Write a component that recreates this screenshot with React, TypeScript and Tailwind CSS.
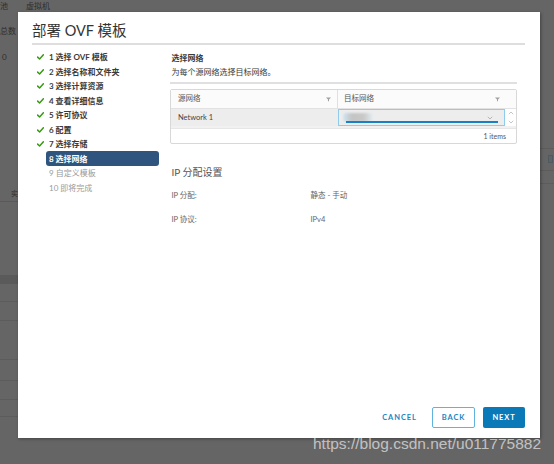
import React from "react";

const Check = () => (
  <svg width="7" height="6" viewBox="0 0 7 6" className="block">
    <path d="M0.6 3.1 L2.6 5 L6.4 0.8" fill="none" stroke="#3a9a12" strokeWidth="1.5" strokeLinecap="round" strokeLinejoin="round" />
  </svg>
);

const Funnel = () => (
  <svg width="5" height="5" viewBox="0 0 5 5" className="block">
    <path d="M0 0.5 H5 L3 2.6 V4.6 L2 4 V2.6 Z" fill="#a0a0a0" />
  </svg>
);

const Chevron = ({ up = false, color = "#a8a8a8" }: { up?: boolean; color?: string }) => (
  <svg width="6" height="4" viewBox="0 0 6 4" className="block">
    <path d={up ? "M0.8 3.2 L3 1 L5.2 3.2" : "M0.8 0.8 L3 3 L5.2 0.8"} fill="none" stroke={color} strokeWidth="0.8" />
  </svg>
);

const steps: { label: string; state: "done" | "current" | "todo" }[] = [
  { label: "1 选择 OVF 模板", state: "done" },
  { label: "2 选择名称和文件夹", state: "done" },
  { label: "3 选择计算资源", state: "done" },
  { label: "4 查看详细信息", state: "done" },
  { label: "5 许可协议", state: "done" },
  { label: "6 配置", state: "done" },
  { label: "7 选择存储", state: "done" },
  { label: "8 选择网络", state: "current" },
  { label: "9 自定义模板", state: "todo" },
  { label: "10 即将完成", state: "todo" },
];

export default function App() {
  return (
    <div className="relative w-[554px] h-[464px] overflow-hidden bg-[#656565] font-['Lato','Noto_Sans_CJK_SC',sans-serif]">
      {/* dimmed background page */}
      <div className="flex flex-col w-full h-full">
        <div className="h-[12px] flex items-start text-[8px] leading-[10px] text-[#2e2e2e] pt-[1px]">
          <span className="ml-0">池</span>
          <span className="ml-[18px]">虚拟机</span>
        </div>
        <div className="flex flex-1">
          <div className="w-[18px] flex flex-col">
            <div className="h-[13px]" />
            <div className="h-[12px] text-[8px] leading-[12px] text-[#2e2e2e]">总数</div>
            <div className="h-[14px]" />
            <div className="h-[12px] text-[8px] leading-[12px] text-[#2e2e2e] pl-[2px]">0</div>
            <div className="h-[123px]" />
            <div className="h-[15px] text-[7px] leading-[15px] text-[#2e2e2e] pl-[11px] overflow-hidden">实</div>
            <div className="h-[1px] bg-[#595959]" />
            <div className="h-[73px]" />
            <div className="h-[9px] bg-[#5a5a5a]" />
            <div className="h-[18px] border-b border-[#5c5c5c]" />
            <div className="h-[19px] border-b border-[#5c5c5c]" />
            <div className="h-[39px] border-b border-[#5c5c5c]" />
            <div className="h-[21px] border-b border-[#5c5c5c]" />
            <div className="h-[19px] border-b border-[#5c5c5c]" />
            <div className="h-[17px] border-b border-[#5c5c5c]" />
          </div>
          <div className="flex-1" />
          <div className="w-[14px] flex flex-col">
            <div className="h-[137px] border-b border-[#5c5c5c]" />
            <div className="h-[6px]" />
            <div className="h-[8px] w-[5px] ml-[8px] border border-[#4e5a60] bg-[#5d6366]" />
            <div className="h-[8px] border-b border-[#5c5c5c]" />
            <div className="h-[13px] border-b border-[#5c5c5c]" />
          </div>
        </div>
      </div>

      {/* modal dialog */}
      <div className="absolute left-[18px] top-[12px] w-[522px] h-[426px] bg-white shadow-[1px_1px_3px_rgba(0,0,0,0.35)] flex flex-col pl-[14px] pr-[15px] pb-[10px]">
        <div className="pt-[9px] pb-[2px]">
          <div className="h-[20px] text-[14.5px] leading-[20px] text-[#333]">部署 OVF 模板</div>
        </div>
        <div className="h-[2px] bg-[#dedede]" />

        <div className="flex flex-1">
          {/* steps nav */}
          <div className="w-[138px] pl-[5px] pt-[5px] flex flex-col">
            {steps.map((s) => (
              <div key={s.label} className="flex items-center h-[14.5px]">
                <div className="w-[9px] flex items-center">{s.state === "done" && <Check />}</div>
                {s.state === "current" ? (
                  <div className="w-[113px] h-[15px] rounded-[3px] bg-[#2f557e] pl-[3px] flex items-center text-[8px] font-bold text-white">
                    {s.label}
                  </div>
                ) : (
                  <div className={"pl-[3px] text-[8px] " + (s.state === "done" ? "font-bold text-[#3a3a3a]" : "text-[#9a9a9a]")}>
                    {s.label}
                  </div>
                )}
              </div>
            ))}
          </div>

          {/* content */}
          <div className="w-[347px] pt-[6px] flex flex-col">
            <div className="pl-[1.5px] text-[8px] leading-[14px] font-bold text-[#3a3a3a]">选择网络</div>
            <div className="pl-[1.5px] text-[8px] leading-[14px] text-[#3a3a3a]">为每个源网络选择目标网络。</div>
            <div className="mt-[3px] h-[2px] bg-[#e0e0e0]" />

            <div className="mt-[5px] border border-[#d8d8d8] rounded-[2px] flex flex-col">
              <div className="flex h-[19px] border-b border-[#e2e2e2] bg-[#fbfbfb]">
                <div className="w-[167px] flex items-center justify-between pl-[7px] pr-[6px] border-r border-[#e0e0e0] text-[7.5px] text-[#555]">
                  <span>源网络</span>
                  <Funnel />
                </div>
                <div className="flex-1 flex items-center justify-between pl-[6px] pr-[16px] text-[7.5px] text-[#555]">
                  <span>目标网络</span>
                  <Funnel />
                </div>
              </div>
              <div className="flex h-[17px]">
                <div className="w-[167px] bg-[#ededed] flex items-center pl-[7px] text-[7.5px] text-[#444]">Network 1</div>
                <div className="relative w-[167px] bg-[#ededed] border border-[#8fcbea] flex items-center pl-[4px] pr-[11px]">
                  <div className="w-[30px] h-[9px] rounded-[3px] bg-[linear-gradient(90deg,#cfe6f3,#c4c4c4_30%,#c9c9c9_70%,#e4eef3)] blur-[1.2px]" />
                  <div className="flex-1" />
                  <Chevron />
                  <div className="absolute left-[7px] right-[6px] bottom-[2px] h-[2px] bg-[#1a80c4]" />
                </div>
                <div className="flex-1 flex flex-col items-center justify-between py-[2px]">
                  <Chevron up color="#b8b8b8" />
                  <Chevron color="#b8b8b8" />
                </div>
              </div>
              <div className="h-[2px] bg-[#f1f1f1]" />
              <div className="h-[15px] border-t border-[#e6e6e6] flex items-center justify-end pr-[10px] text-[7px] text-[#555]">1 items</div>
            </div>

            <div className="mt-[21px] pl-[1.5px] text-[10px] leading-[14px] text-[#555]">IP 分配设置</div>
            <div className="mt-[10px] flex pl-[1.5px] text-[7.5px] leading-[14px] text-[#666]">
              <div className="w-[139px]">IP 分配:</div>
              <div>静态 - 手动</div>
            </div>
            <div className="mt-[10px] flex pl-[1.5px] text-[7.5px] leading-[14px] text-[#666]">
              <div className="w-[139px]">IP 协议:</div>
              <div>IPv4</div>
            </div>
          </div>
        </div>

        <div className="flex justify-end items-center h-[21px]">
          <button className="w-[43px] h-[21px] mr-[11px] text-[7.5px] font-bold tracking-[0.9px] text-[#1b86c2]">CANCEL</button>
          <button className="w-[43px] h-[21px] mr-[8px] rounded-[2px] border border-[#5fb3dd] text-[7.5px] font-bold tracking-[0.9px] text-[#1b86c2]">BACK</button>
          <button className="w-[42px] h-[21px] rounded-[2px] bg-[#0a79b8] text-[7.5px] font-bold tracking-[0.9px] text-white">NEXT</button>
        </div>
      </div>

      {/* watermark */}
      <div className="absolute left-[313px] top-[435px] text-[15.5px] leading-[18px] text-[rgba(255,255,255,0.62)] font-['Liberation_Sans',sans-serif] whitespace-nowrap">
        https://blog.csdn.net/u011775882
      </div>
    </div>
  );
}
